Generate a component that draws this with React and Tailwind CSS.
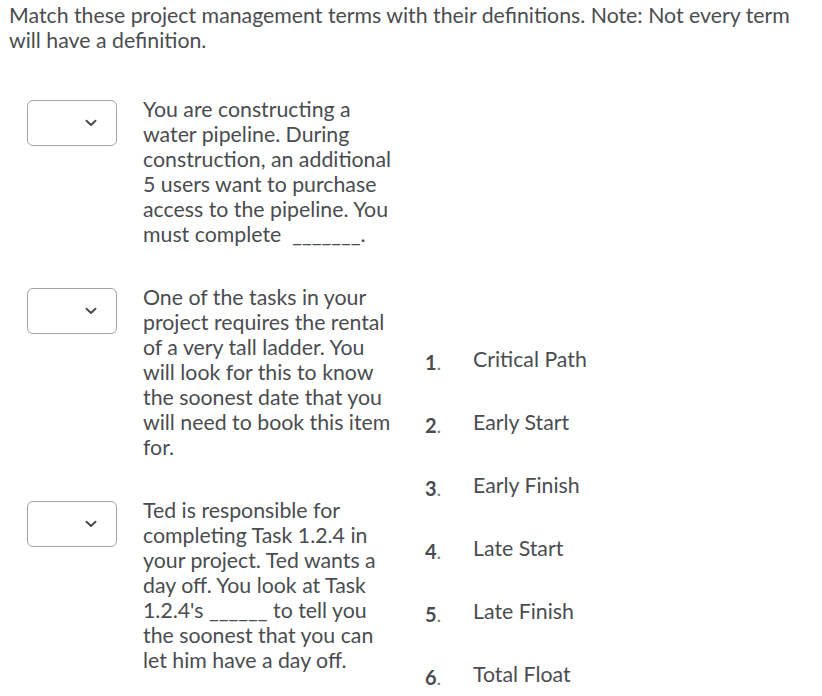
import React from "react";

function Select() {
  return (
    <div className="w-[90px] h-[46px] mt-[3px] border border-[#a3a3a3] rounded-[6px] bg-white flex items-center justify-end pr-[19px] shrink-0">
      <svg width="12" height="8" viewBox="0 0 12 8">
        <path d="M1.5 1.8 L6 6 L10.5 1.8" fill="none" stroke="#494c4e" strokeWidth="2" strokeLinecap="round" strokeLinejoin="round" />
      </svg>
    </div>
  );
}

const rows = [
  [
    "You are constructing a",
    "water pipeline. During",
    "construction, an additional",
    "5 users want to purchase",
    "access to the pipeline. You",
    "must complete \u00a0_______.",
  ],
  [
    "One of the tasks in your",
    "project requires the rental",
    "of a very tall ladder. You",
    "will look for this to know",
    "the soonest date that you",
    "will need to book this item",
    "for.",
  ],
  [
    "Ted is responsible for",
    "completing Task 1.2.4 in",
    "your project. Ted wants a",
    "day off. You look at Task",
    "1.2.4's ______ to tell you",
    "the soonest that you can",
    "let him have a day off.",
  ],
];

const terms = ["Critical Path", "Early Start", "Early Finish", "Late Start", "Late Finish", "Total Float"];

export default function App() {
  return (
    <div className="w-[822px] h-[696px] bg-white text-[#4a4d50] overflow-hidden" style={{ fontFamily: "Lato, 'Open Sans', sans-serif" }}>
      <p className="pl-[9px] pt-[3px] text-[21.3px] leading-[25px] pr-2 whitespace-nowrap">
        Match these project management terms with their definitions. Note: Not every term
        <br />
        will have a definition.
      </p>
      <div className="flex pt-[44px]">
        <div className="flex flex-col pl-[27px] gap-[38px]">
          {rows.map((lines, i) => (
            <div key={i} className="flex items-start">
              <Select />
              <p className="ml-[26px] w-[250px] text-[21.3px] leading-[25px] whitespace-nowrap">
                {lines.map((l, j) => (
                  <span key={j} className="block">{l}</span>
                ))}
              </p>
            </div>
          ))}
        </div>
        <div className="ml-[32px] pt-[250px] flex flex-col gap-[38px]">
          {terms.map((t, i) => (
            <div key={t} className="flex items-start h-[25px]">
              <span className="w-[48px] text-[20px] leading-[25px] font-bold pt-[3px]">
                {i + 1}<span className="font-normal text-[#7a7c7e]">.</span>
              </span>
              <span className="text-[21.3px] leading-[25px]">{t}</span>
            </div>
          ))}
        </div>
      </div>
    </div>
  );
}
